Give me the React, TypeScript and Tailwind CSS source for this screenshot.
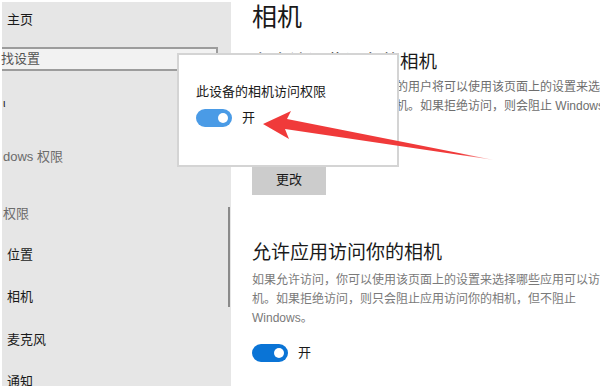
import React from 'react';

const font = { fontFamily: '"Liberation Sans", "Noto Sans CJK SC", sans-serif' };

function Toggle({ color }: { color: string }) {
  return (
    <div className={`flex h-[18px] w-[36px] items-center justify-end rounded-full pr-[4px] ${color}`}>
      <div className="h-[10px] w-[10px] rounded-full bg-white" />
    </div>
  );
}

export default function App() {
  return (
    <div style={font} className="relative flex h-[386px] w-[600px] overflow-hidden bg-white pl-[2px] pt-[2px]">
      {/* sidebar */}
      <div className="relative flex w-[229px] shrink-0 flex-col bg-[#e6e6e6] text-[13px] text-[#1a1a1a]">
        <div className="pl-[5px] pt-[9px] leading-[18px]">主页</div>
        <div className="mt-[18px] flex h-[29px] w-[216px] items-center border-2 border-l-0 border-[#9c9c9c] bg-[#f2f2f2] text-[#555]">
          <span className="-ml-[1px]">找设置</span>
        </div>
        <div className="mt-[23px] h-[18px] pl-[1px] text-[11px] leading-[18px]">ι</div>
        <div className="mt-[36px] pl-[1px] leading-[18px] text-[#6b6b6b]">dows 权限</div>
        <div className="mt-[39px] pl-[1px] leading-[18px] text-[#6b6b6b]">权限</div>
        <div className="mt-[23px] pl-[5px] leading-[18px]">位置</div>
        <div className="mt-[24px] pl-[5px] leading-[18px]">相机</div>
        <div className="mt-[25px] pl-[5px] leading-[18px]">麦克风</div>
        <div className="mt-[24px] pl-[5px] leading-[18px]">通知</div>
        <div className="absolute left-[226px] top-[205px] h-[100px] w-[2px] bg-[#8a8a8a]" />
      </div>

      {/* main */}
      <div className="flex min-w-0 flex-1 flex-col pl-[21px] text-[#1a1a1a]">
        <div className="-mt-[2px] text-[25px] leading-[34px]">相机</div>
        <div className="mt-[16px] text-[18.5px] leading-[24px]">允许访问此设备的相机</div>
        <div className="mt-[4px] text-[12px] leading-[19px] text-[#6e6e6e]">
          <div className="whitespace-nowrap">如果允许访问，使用此设备的用户将可以使用该页面上的设置来选择应用</div>
          <div className="whitespace-nowrap">是否可以访问此设备上的相机。如果拒绝访问，则会阻止 Windows 和应用访问相机。</div>
        </div>
        <div className="mt-[27px] text-[12px] leading-[19px] text-[#1a1a1a]">此设备的相机访问已打开</div>
        <div className="mt-[3px] flex h-[30px] w-[74px] items-center justify-center bg-[#cccccc] text-[13px]">更改</div>
        <div className="mt-[45px] text-[19px] leading-[26px]">允许应用访问你的相机</div>
        <div className="mt-[5px] text-[12px] leading-[19px] text-[#7a7a7a]">
          <div className="whitespace-nowrap">如果允许访问，你可以使用该页面上的设置来选择哪些应用可以访问你的相</div>
          <div className="whitespace-nowrap">机。如果拒绝访问，则只会阻止应用访问你的相机，但不阻止</div>
          <div>Windows。</div>
        </div>
        <div className="mt-[15px] flex items-center gap-[10px] text-[13px]">
          <Toggle color="bg-[#0a74d6]" />
          <span>开</span>
        </div>
      </div>

      {/* popup */}
      <div className="absolute left-[177px] top-[53px] flex h-[114px] w-[222px] flex-col border-2 border-[#d4d4d4] bg-white pl-[17px] pt-[27px] text-[#1a1a1a]">
        <div className="text-[13px] leading-[20px]">此设备的相机访问权限</div>
        <div className="mt-[6px] flex items-center gap-[10px] text-[13px]">
          <Toggle color="bg-[#4a9be6]" />
          <span>开</span>
        </div>
      </div>

      {/* arrow */}
      <svg className="pointer-events-none absolute left-0 top-0" width="600" height="386">
        <defs>
          <linearGradient id="fade" x1="264" y1="0" x2="495" y2="0" gradientUnits="userSpaceOnUse">
            <stop offset="0" stopColor="#f03a3a" />
            <stop offset="0.85" stopColor="#f03a3a" />
            <stop offset="1" stopColor="#f03a3a" stopOpacity="0.2" />
          </linearGradient>
        </defs>
        <polygon
          points="263,124 291,111 287,119 494,160 285,129 289,139"
          fill="url(#fade)"
        />
      </svg>
    </div>
  );
}
